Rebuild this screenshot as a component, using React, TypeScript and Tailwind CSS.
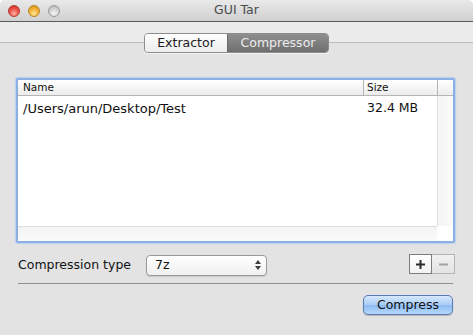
import React from "react";

const font = { fontFamily: '"DejaVu Sans", "Liberation Sans", sans-serif' };

function Light({ cls }: { cls: string }) {
  return <div className={`w-[12px] h-[12px] rounded-full border ${cls}`} />;
}

export default function App() {
  return (
    <div
      className="w-[473px] h-[335px] bg-[#e3e3e3] flex flex-col overflow-hidden rounded-t-[5px]"
      style={font}
    >
      {/* Title bar */}
      <div className="h-[22px] shrink-0 grid grid-cols-[1fr_auto_1fr] items-center bg-[linear-gradient(#e9e9e9,#d0d0d0)] border-b border-[#5c5c5c]">
        <div className="flex items-center gap-[8px] pl-[8px]">
          <Light cls="border-[#b03a33] bg-[radial-gradient(circle_at_50%_75%,#ffb3a8_0%,#ee5a4f_45%,#c8261d_100%)]" />
          <Light cls="border-[#b7862a] bg-[radial-gradient(circle_at_50%_75%,#ffe79a_0%,#f4b63c_45%,#cf8d17_100%)]" />
          <Light cls="border-[#9a9a9a] bg-[radial-gradient(circle_at_50%_75%,#f5f5f5_0%,#d4d4d4_50%,#adadad_100%)]" />
        </div>
        <div className="text-[12.5px] text-[#4a4a4a] leading-none">GUI Tar</div>
        <div />
      </div>

      {/* Tab strip */}
      <div className="h-[21px] shrink-0 bg-[#ebebeb] border-b border-[#bdbdbd]" />
      <div className="flex justify-center -mt-[10px]">
        <div className="flex h-[20px] rounded-[4px] border border-[#8c8c8c] overflow-hidden shadow-[0_1px_0_rgba(255,255,255,0.6)] text-[12.5px] leading-none">
          <div className="w-[82px] flex items-center justify-center bg-[linear-gradient(#ffffff,#ececec)] text-[#1a1a1a]">
            Extractor
          </div>
          <div className="w-[101px] flex items-center justify-center bg-[linear-gradient(#8e8e8e,#6f6f6f)] text-[#ececec] border-l border-[#6a6a6a]">
            Compressor
          </div>
        </div>
      </div>

      {/* Table */}
      <div className="mt-[25px] ml-[16px] w-[439px] h-[165px] border-2 border-[#8cb0e3] shadow-[0_0_1px_1px_#b9d0f0] rounded-[2px] bg-white flex flex-col">
        <div className="flex flex-1 min-h-0">
          <div className="flex-1 flex flex-col">
            <div className="h-[16px] flex bg-[linear-gradient(#ffffff,#ececec)] border-b border-[#b5b5b5] text-[10.5px] text-[#111] leading-none">
              <div className="w-[345px] flex items-center pl-[5px]">Name</div>
              <div className="flex-1 flex items-center pl-[3px] border-l border-[#b5b5b5]">Size</div>
            </div>
            <div className="h-[24px] flex items-center text-[#111] leading-none">
              <div className="w-[345px] pl-[5px] text-[13px]">/Users/arun/Desktop/Test</div>
              <div className="flex-1 pl-[4px] text-[12.5px]">32.4 MB</div>
            </div>
          </div>
          <div className="w-[16px] flex flex-col">
            <div className="h-[16px] bg-[linear-gradient(#ffffff,#ececec)] border-b border-l border-[#b5b5b5]" />
            <div className="flex-1 border-l border-[#e2e2e2] bg-[linear-gradient(90deg,#f4f4f4,#fbfbfb)]" />
          </div>
        </div>
        <div className="h-[15px] flex shrink-0">
          <div className="flex-1 border-t border-[#dedede] bg-[linear-gradient(#f4f4f4,#fbfbfb)]" />
          <div className="w-[16px] bg-white" />
        </div>
      </div>

      {/* Compression type row */}
      <div className="mt-[11px] flex items-center h-[22px] pl-[18px] pr-[18px]">
        <div className="w-[128px] text-[12.5px] text-[#111] leading-none">Compression type</div>
        <div className="w-[121px] h-[21px] rounded-[4px] border border-[#9a9a9a] bg-[linear-gradient(#ffffff,#f0f0f0)] shadow-[0_1px_1px_rgba(0,0,0,0.12)] flex items-center pl-[8px] pr-[5px]">
          <span className="text-[12.5px] text-[#111] leading-none flex-1">7z</span>
          <div className="flex flex-col items-center gap-[2px]">
            <div className="w-0 h-0 border-l-[3px] border-r-[3px] border-b-[4px] border-l-transparent border-r-transparent border-b-[#3e3e3e]" />
            <div className="w-0 h-0 border-l-[3px] border-r-[3px] border-t-[4px] border-l-transparent border-r-transparent border-t-[#3e3e3e]" />
          </div>
        </div>
        <div className="ml-auto flex h-[20px] self-start">
          <div className="w-[23px] flex items-center justify-center bg-[linear-gradient(#ffffff,#f2f2f2)] border border-[#7d7d7d]">
            <svg width="11" height="11" viewBox="0 0 11 11">
              <path d="M5.5 1v9M1 5.5h9" stroke="#2a2a2a" strokeWidth="2" />
            </svg>
          </div>
          <div className="w-[23px] flex items-center justify-center bg-[linear-gradient(#f1f1f1,#e3e3e3)] border border-l-0 border-[#b4b4b4]">
            <svg width="11" height="11" viewBox="0 0 11 11">
              <path d="M1 5.5h9" stroke="#a3a3a3" strokeWidth="2" />
            </svg>
          </div>
        </div>
      </div>

      {/* Separator */}
      <div className="mt-[7px] ml-[18px] mr-[20px] h-px bg-[#8f8f8f]" />

      {/* Compress button */}
      <div className="mt-[11px] flex justify-end pr-[20px]">
        <div className="w-[90px] h-[20px] rounded-[5px] border border-[#5a7ab3] bg-[linear-gradient(#d6e8fc_0%,#a9cdf6_50%,#8dbcf1_51%,#b5d8fb_100%)] shadow-[0_1px_1px_rgba(0,0,0,0.2)] flex items-center justify-center text-[12.5px] text-[#111] leading-none">
          Compress
        </div>
      </div>
    </div>
  );
}
